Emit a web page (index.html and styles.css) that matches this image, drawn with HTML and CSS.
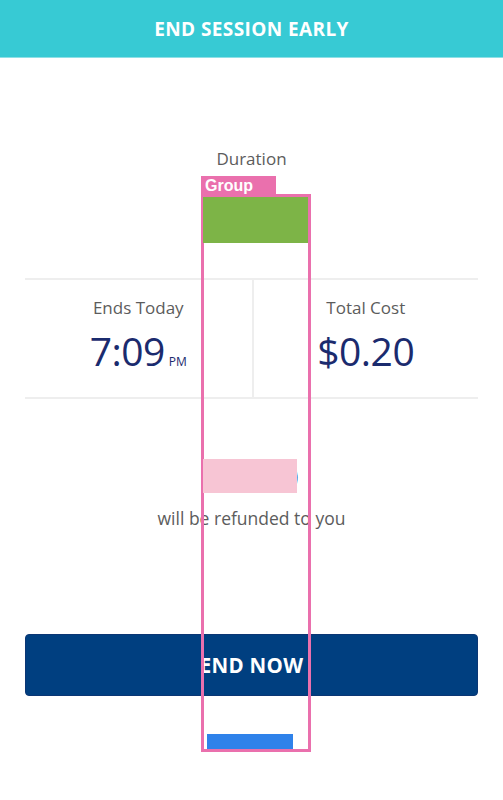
FILE: index.html
```html
<!DOCTYPE html>
<html>
<head>
<meta charset="utf-8">
<link rel="stylesheet" href="styles.css">
</head>
<body>
<div class="page">
  <header class="topbar">END SESSION EARLY</header>
  <main class="content">
    <section class="duration">
      <div class="label">Duration</div>
      <div class="duration-value">0:04 <span class="unit">min</span></div>
    </section>
    <section class="stats">
      <div class="stat">
        <div class="label">Ends Today</div>
        <div class="big">7:09<span class="ampm">PM</span></div>
      </div>
      <div class="stat">
        <div class="label">Total Cost</div>
        <div class="big">$0.20</div>
      </div>
    </section>
    <section class="refund">
      <div class="refund-amount">($1.80)</div>
      <div class="refund-text">will be refunded to you</div>
    </section>
    <button class="end-btn">END NOW</button>
  </main>

  <div class="ov-group"><span class="ov-label">Group</span></div>
  <div class="ov-green"></div>
  <div class="ov-pink"></div>
  <div class="ov-blue"></div>
</div>
</body>
</html>
```
FILE: styles.css
```css
* { box-sizing: border-box; }
html, body { margin: 0; padding: 0; background: #fff; }
body { font-family: "Open Sans", "Liberation Sans", sans-serif; }
.page { position: relative; width: 503px; height: 800px; overflow: hidden; }

.topbar {
  height: 58px;
  background: #37cad4;
  border-bottom: 1px solid #8ee0e6;
  color: #fff;
  font-weight: 700;
  font-size: 19px;
  letter-spacing: 0.4px;
  display: flex;
  align-items: center;
  justify-content: center;
  padding-top: 1px;
}

.content { padding: 0 25px 0 25px; display: flex; flex-direction: column; }

.label { color: #5c5c5c; font-size: 17px; }

.duration { display: flex; flex-direction: column; align-items: center; padding-top: 90px; height: 220px; }
.duration .label { line-height: 22px; }
.duration-value { margin-top: 20px; color: #1b2b6e; font-size: 30px; line-height: 40px; }
.duration-value .unit { font-size: 13px; }

.stats {
  display: grid;
  grid-template-columns: 1fr 1fr;
  border-top: 2px solid #eeeeee;
  border-bottom: 2px solid #eeeeee;
  height: 121px;
}
.stat { display: flex; flex-direction: column; align-items: center; padding-top: 17px; }
.stat + .stat { border-left: 2px solid #eeeeee; }
.stat .label { line-height: 22px; }
.big { color: #1b2b6e; font-size: 39px; line-height: 46px; margin-top: 9px; letter-spacing: -0.5px; }
.ampm { font-size: 12px; margin-left: 4px; letter-spacing: 0; }

.refund { display: flex; flex-direction: column; align-items: center; padding-top: 56px; height: 235px; }
.refund-amount { color: #1b2b6e; font-size: 30px; line-height: 40px; }
.refund-text { color: #5c5c5c; font-size: 17.5px; line-height: 22px; margin-top: 12px; }

.end-btn {
  height: 62px;
  width: 100%;
  background: #003f80;
  border: 1px solid #0b3674;
  border-radius: 4px;
  color: #fff;
  font-family: "Open Sans", "Liberation Sans", sans-serif;
  font-weight: 700;
  font-size: 20.5px;
  letter-spacing: 0.3px;
}

/* annotation overlays */
.ov-group {
  position: absolute; left: 201px; top: 194px; width: 110px; height: 558px;
  border: 3px solid #ea70ad;
}
.ov-label {
  position: absolute; left: -3px; top: -21px; width: 75px; height: 20px;
  background: #ea70ad; color: #fff; font-weight: 700; font-size: 16px;
  line-height: 20px; padding-left: 4px;
  font-family: "Liberation Sans", sans-serif;
}
.ov-green { position: absolute; left: 203px; top: 197px; width: 105px; height: 46px; background: #7db447; }
.ov-pink { position: absolute; left: 203px; top: 459px; width: 94px; height: 34px; background: #f7c5d4; }
.ov-blue { position: absolute; left: 207px; top: 734px; width: 86px; height: 15px; background: #2f82ea; }
```
